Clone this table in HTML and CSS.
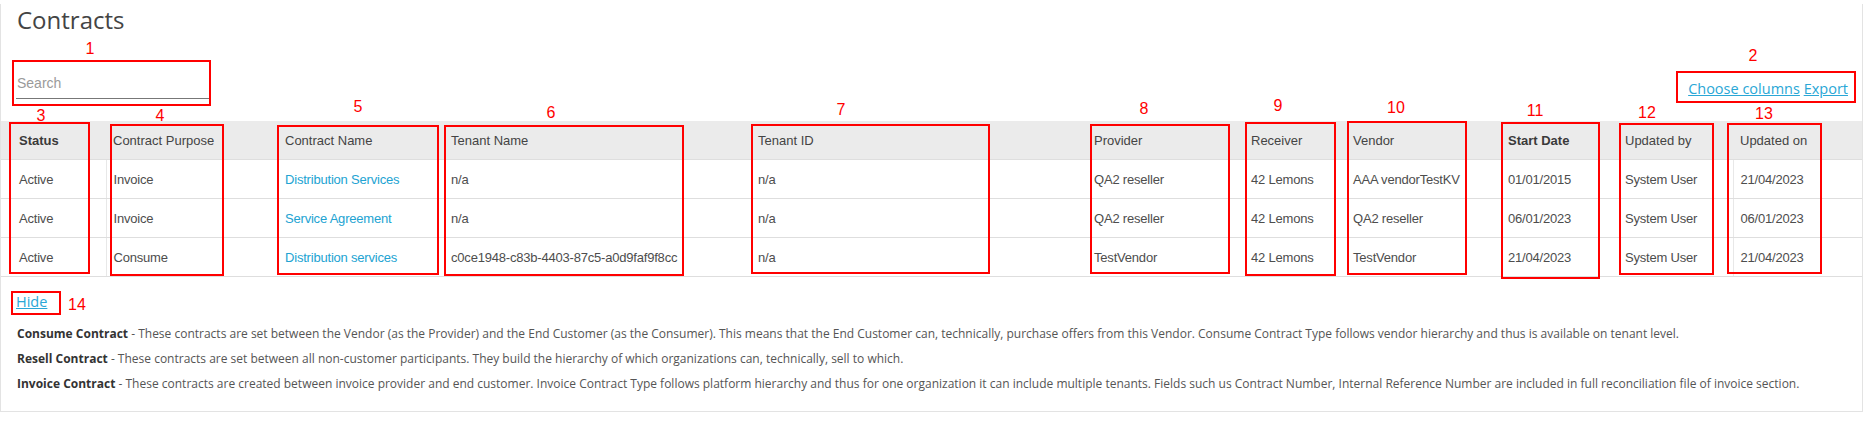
FILE: index.html
```html
<!DOCTYPE html>
<html lang="en">
<head>
    <meta charset="UTF-8">
    <meta name="viewport" content="width=device-width, initial-scale=1.0">
    <title>Contracts</title>
    <link rel="stylesheet" href="styles.css">
</head>
<body>
    <div class="page">
        <h1 class="title">Contracts</h1>

        <div class="toolbar">
            <input type="text" class="search" placeholder="Search">
            <div class="actions">
                <a href="#">Choose columns</a> <a href="#">Export</a>
            </div>
        </div>

        <table class="grid">
            <colgroup>
                <col class="w-status">
                <col class="w-purpose">
                <col class="w-name">
                <col class="w-tenant">
                <col class="w-tenant-id">
                <col class="w-provider">
                <col class="w-receiver">
                <col class="w-vendor">
                <col class="w-start">
                <col class="w-upd-by">
                <col class="w-upd-on">
            </colgroup>
            <thead>
                <tr>
                    <th class="sorted">Status</th>
                    <th>Contract Purpose</th>
                    <th>Contract Name</th>
                    <th>Tenant Name</th>
                    <th>Tenant ID</th>
                    <th>Provider</th>
                    <th>Receiver</th>
                    <th>Vendor</th>
                    <th class="sorted">Start Date</th>
                    <th>Updated by</th>
                    <th>Updated on</th>
                </tr>
            </thead>
            <tbody>
                <tr>
                    <td>Active</td>
                    <td class="split">Invoice</td>
                    <td><a href="#">Distribution Services</a></td>
                    <td>n/a</td>
                    <td>n/a</td>
                    <td>QA2 reseller</td>
                    <td>42 Lemons</td>
                    <td>AAA vendorTestKV</td>
                    <td>01/01/2015</td>
                    <td>System User</td>
                    <td class="split">21/04/2023</td>
                </tr>
                <tr>
                    <td>Active</td>
                    <td class="split">Invoice</td>
                    <td><a href="#">Service Agreement</a></td>
                    <td>n/a</td>
                    <td>n/a</td>
                    <td>QA2 reseller</td>
                    <td>42 Lemons</td>
                    <td>QA2 reseller</td>
                    <td>06/01/2023</td>
                    <td>System User</td>
                    <td class="split">06/01/2023</td>
                </tr>
                <tr>
                    <td>Active</td>
                    <td class="split">Consume</td>
                    <td><a href="#">Distribution services</a></td>
                    <td>c0ce1948-c83b-4403-87c5-a0d9faf9f8cc</td>
                    <td>n/a</td>
                    <td>TestVendor</td>
                    <td>42 Lemons</td>
                    <td>TestVendor</td>
                    <td>21/04/2023</td>
                    <td>System User</td>
                    <td class="split">21/04/2023</td>
                </tr>
            </tbody>
        </table>

        <div class="legend">
            <a href="#" class="hide-link">Hide</a>
            <p><b>Consume Contract</b> - These contracts are set between the Vendor (as the Provider) and the End Customer (as the Consumer). This means that the End Customer can, technically, purchase offers from this Vendor. Consume Contract Type follows vendor hierarchy and thus is available on tenant level.</p>
            <p><b>Resell Contract</b> - These contracts are set between all non-customer participants. They build the hierarchy of which organizations can, technically, sell to which.</p>
            <p><b>Invoice Contract</b> - These contracts are created between invoice provider and end customer. Invoice Contract Type follows platform hierarchy and thus for one organization it can include multiple tenants. Fields such us Contract Number, Internal Reference Number are included in full reconciliation file of invoice section.</p>
        </div>
    </div>

    <!-- review markers drawn over the screen -->
    <div class="marks">
        <div class="box b1"></div><span class="num n1">1</span>
        <div class="box b2"></div><span class="num n2">2</span>
        <div class="box b3"></div><span class="num n3">3</span>
        <div class="box b4"></div><span class="num n4">4</span>
        <div class="box b5"></div><span class="num n5">5</span>
        <div class="box b6"></div><span class="num n6">6</span>
        <div class="box b7"></div><span class="num n7">7</span>
        <div class="box b8"></div><span class="num n8">8</span>
        <div class="box b9"></div><span class="num n9">9</span>
        <div class="box b10"></div><span class="num n10">10</span>
        <div class="box b11"></div><span class="num n11">11</span>
        <div class="box b12"></div><span class="num n12">12</span>
        <div class="box b13"></div><span class="num n13">13</span>
        <div class="box b14"></div><span class="num n14">14</span>
    </div>
</body>
</html>
```

FILE: styles.css
```css
body {
    margin: 0;
    padding: 0;
    background-color: #fff;
    font-family: "Liberation Sans", Arial, sans-serif;
    position: relative;
}

.page {
    width: 1863px;
    box-sizing: border-box;
    border: 1px solid #e3e3e3;
    border-top: none;
    padding-bottom: 15px;
}

.title {
    margin: 4px 0 0 16px;
    font-family: "Open Sans", sans-serif;
    font-size: 24px;
    font-weight: normal;
    line-height: 32px;
    color: #444;
}

.toolbar {
    display: flex;
    justify-content: space-between;
    align-items: flex-end;
    margin-top: 32px;
    padding: 0 14px 0 15px;
}

.search {
    width: 194px;
    height: 30px;
    box-sizing: content-box;
    padding: 0 0 0 1px;
    border: none;
    border-bottom: 1px solid #777;
    font-family: "Liberation Sans", Arial, sans-serif;
    font-size: 14px;
    color: #333;
    outline: none;
}

.search::placeholder {
    color: #9a9a9a;
}

.actions {
    font-family: "Open Sans", sans-serif;
    font-size: 14.5px;
    line-height: 20px;
}

.actions a,
.hide-link {
    color: #2aa7d6;
    text-decoration: underline;
}

.grid {
    width: 100%;
    margin-top: 22px;
    border-collapse: collapse;
    table-layout: fixed;
    font-size: 13px;
}

.w-status { width: 105px; }
.w-purpose { width: 172px; }
.w-name { width: 166px; }
.w-tenant { width: 307px; }
.w-tenant-id { width: 336px; }
.w-provider { width: 157px; }
.w-receiver { width: 102px; }
.w-vendor { width: 155px; }
.w-start { width: 117px; }
.w-upd-by { width: 115px; }
.w-upd-on { width: 129px; }

.grid th,
.grid td {
    height: 38px;
    padding: 0 0 0 7px;
    text-align: left;
    white-space: nowrap;
    border-bottom: 1px solid #dedede;
}

.grid th:first-child,
.grid td:first-child {
    padding-left: 18px;
}

.grid th {
    background-color: #ebebeb;
    font-weight: normal;
    color: #444;
}

.grid th.sorted {
    font-weight: bold;
    color: #3a3a3a;
}

.grid td {
    color: #4d4d4d;
    letter-spacing: -0.2px;
}

.grid td.split {
    border-left: 1px solid #e8e8e8;
}

.grid td a {
    color: #22a3d2;
    text-decoration: none;
}

.legend {
    padding: 13px 0 0 15px;
    font-family: "Open Sans", sans-serif;
}

.hide-link {
    display: inline-block;
    font-size: 14.5px;
    line-height: 20px;
    margin-bottom: 9px;
}

.legend p {
    margin: 0;
    padding-left: 1px;
    font-size: 12px;
    line-height: 25px;
    color: #555;
}

.legend p b {
    color: #333;
}

/* markers */
.marks {
    position: absolute;
    top: 0;
    left: 0;
}

.box {
    position: absolute;
    box-sizing: border-box;
    border: 2px solid #ff0000;
}

.num {
    position: absolute;
    width: 30px;
    margin-left: -15px;
    margin-top: -9px;
    text-align: center;
    font-family: "Liberation Sans", Arial, sans-serif;
    font-size: 16px;
    line-height: 18px;
    color: #ff0000;
}

.b1 { left: 12px; top: 60px; width: 199px; height: 46px; }
.b2 { left: 1676px; top: 71px; width: 180px; height: 32px; }
.b3 { left: 9px; top: 122px; width: 81px; height: 152px; }
.b4 { left: 110px; top: 124px; width: 114px; height: 152px; }
.b5 { left: 277px; top: 125px; width: 162px; height: 150px; }
.b6 { left: 444px; top: 125px; width: 240px; height: 151px; }
.b7 { left: 751px; top: 124px; width: 239px; height: 150px; }
.b8 { left: 1090px; top: 124px; width: 140px; height: 150px; }
.b9 { left: 1245px; top: 122px; width: 91px; height: 154px; }
.b10 { left: 1347px; top: 121px; width: 120px; height: 154px; }
.b11 { left: 1501px; top: 122px; width: 99px; height: 157px; }
.b12 { left: 1619px; top: 123px; width: 95px; height: 152px; }
.b13 { left: 1727px; top: 123px; width: 95px; height: 151px; }
.b14 { left: 11px; top: 291px; width: 50px; height: 24px; }

.n1 { left: 90px; top: 49px; }
.n2 { left: 1753px; top: 56px; }
.n3 { left: 41px; top: 116px; }
.n4 { left: 160px; top: 116px; }
.n5 { left: 358px; top: 107px; }
.n6 { left: 551px; top: 113px; }
.n7 { left: 841px; top: 110px; }
.n8 { left: 1144px; top: 109px; }
.n9 { left: 1278px; top: 106px; }
.n10 { left: 1396px; top: 108px; }
.n11 { left: 1535px; top: 111px; }
.n12 { left: 1647px; top: 113px; }
.n13 { left: 1764px; top: 114px; }
.n14 { left: 77px; top: 305px; }
```
